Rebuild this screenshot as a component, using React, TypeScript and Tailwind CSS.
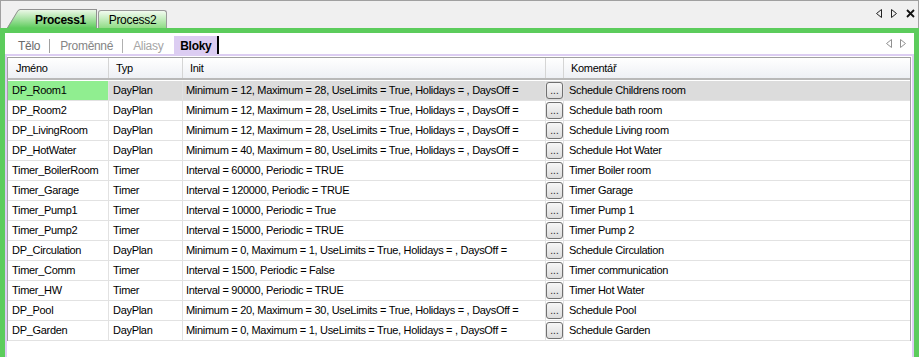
import React from "react";

type Row = { name: string; type: string; init: string; comment: string };

const rows: Row[] = [
  { name: "DP_Room1", type: "DayPlan", init: "Minimum = 12, Maximum = 28, UseLimits = True, Holidays = , DaysOff =", comment: "Schedule Childrens room" },
  { name: "DP_Room2", type: "DayPlan", init: "Minimum = 12, Maximum = 28, UseLimits = True, Holidays = , DaysOff =", comment: "Schedule bath room" },
  { name: "DP_LivingRoom", type: "DayPlan", init: "Minimum = 12, Maximum = 28, UseLimits = True, Holidays = , DaysOff =", comment: "Schedule Living room" },
  { name: "DP_HotWater", type: "DayPlan", init: "Minimum = 40, Maximum = 80, UseLimits = True, Holidays = , DaysOff =", comment: "Schedule Hot Water" },
  { name: "Timer_BoilerRoom", type: "Timer", init: "Interval = 60000, Periodic = TRUE", comment: "Timer Boiler room" },
  { name: "Timer_Garage", type: "Timer", init: "Interval = 120000, Periodic = TRUE", comment: "Timer Garage" },
  { name: "Timer_Pump1", type: "Timer", init: "Interval = 10000, Periodic = True", comment: "Timer Pump 1" },
  { name: "Timer_Pump2", type: "Timer", init: "Interval = 15000, Periodic = TRUE", comment: "Timer Pump 2" },
  { name: "DP_Circulation", type: "DayPlan", init: "Minimum = 0, Maximum = 1, UseLimits = True, Holidays = , DaysOff =", comment: "Schedule Circulation" },
  { name: "Timer_Comm", type: "Timer", init: "Interval = 1500, Periodic = False", comment: "Timer communication" },
  { name: "Timer_HW", type: "Timer", init: "Interval = 90000, Periodic = TRUE", comment: "Timer Hot Water" },
  { name: "DP_Pool", type: "DayPlan", init: "Minimum = 20, Maximum = 30, UseLimits = True, Holidays = , DaysOff =", comment: "Schedule Pool" },
  { name: "DP_Garden", type: "DayPlan", init: "Minimum = 0, Maximum = 1, UseLimits = True, Holidays = , DaysOff =", comment: "Schedule Garden" },
];

const cols = "grid grid-cols-[101px_74px_363px_18px_1fr]";

const Arrow = ({ dir, color }: { dir: "l" | "r"; color: string }) => (
  <svg width="6" height="9" viewBox="0 0 6 9">
    {dir === "l" ? (
      <polygon points="5.5,0.5 5.5,8.5 0.5,4.5" fill="none" stroke={color} strokeWidth="1" />
    ) : (
      <polygon points="0.5,0.5 0.5,8.5 5.5,4.5" fill="none" stroke={color} strokeWidth="1" />
    )}
  </svg>
);

const DotsButton = () => (
  <div className="mx-auto flex h-[17px] w-[17px] items-end justify-center rounded-[3px] border border-[#707070] bg-gradient-to-b from-[#f6f6f6] to-[#dcdcdc] pb-[2px] text-[10px] leading-none tracking-normal text-[#222]">
    ...
  </div>
);

export default function App() {
  return (
    <div className="h-[357px] w-[919px] overflow-hidden bg-[#f0f0f0] font-['Liberation_Sans',Arial,sans-serif] text-[11px] tracking-[-0.3px] text-black">
      {/* document tab strip */}
      <div className="flex h-[28px] items-end border-l border-r border-t border-[#a0a0a0] pl-[6px]">
        <div className="flex h-[19px] items-stretch">
          <svg width="13" height="19" viewBox="0 0 13 19" className="block">
            <defs>
              <linearGradient id="tg" x1="0" y1="0" x2="0" y2="1">
                <stop offset="0" stopColor="#eaf7e6" />
                <stop offset="1" stopColor="#5ccc5c" />
              </linearGradient>
            </defs>
            <polygon points="0,19 11,1 13,0 13,19" fill="url(#tg)" />
            <polyline points="0.5,19 11,1.5 13,0.5" fill="none" stroke="#909090" strokeWidth="1" />
          </svg>
          <div className="flex w-[77px] items-center border-r border-t border-[#909090] bg-gradient-to-b from-[#eaf7e6] to-[#5ccc5c] pl-[15px] pt-[1px] text-[12px] font-bold">
            Process1
          </div>
        </div>
        <div className="ml-[1px] flex h-[18px] w-[69px] items-center justify-center rounded-t-[3px] border border-b-0 border-[#9a9a9a] bg-gradient-to-b from-[#f2fbf0] to-[#8fdc85] pt-[1px] text-[12px]">
          Process2
        </div>
        <div className="mb-[10px] ml-auto mr-[3px] flex items-center gap-[9px]">
          <Arrow dir="l" color="#222" />
          <Arrow dir="r" color="#222" />
          <svg width="9" height="9" viewBox="0 0 9 9">
            <path d="M1 1 L8 8 M8 1 L1 8" stroke="#111" strokeWidth="1.8" />
          </svg>
        </div>
      </div>

      {/* green frame */}
      <div className="h-[329px] border-x-[5px] border-t-[5px] border-[#5ccc5c] bg-white">
        {/* inner tabs */}
        <div className="flex h-[23px] items-end border-b-2 border-[#dccdf2] pl-[6px] text-[12px]">
          <div className="flex h-[18px] items-center pt-[1px]">
            <span className="pl-[7px] pr-[9px] text-[#6a6a6a]">Tělo</span>
            <span className="h-[14px] w-px bg-[#a0a0a0]" />
            <span className="pl-[10px] pr-[9px] text-[#858585]">Proměnné</span>
            <span className="h-[14px] w-px bg-[#b0b0b0]" />
            <span className="pl-[10px] pr-[11px] text-[#a5a5a5]">Aliasy</span>
          </div>
          <div className="flex h-[18px] w-[45px] items-center justify-center border-r-2 border-black bg-[#dccdf2] pt-[1px] font-bold">
            Bloky
          </div>
          <div className="mb-[6px] ml-auto mr-[8px] flex items-center gap-[8px]">
            <Arrow dir="l" color="#909090" />
            <Arrow dir="r" color="#909090" />
          </div>
        </div>

        {/* grid panel */}
        <div className="h-[304px] border-x-2 border-[#dccdf2] pt-[1px]">
          <div className="mr-[1px] border-l border-t border-r border-[#a0a0a0]">
            <div className={`${cols} h-[22px] border-b-2 border-[#b9b9b9] bg-gradient-to-b from-white to-[#eef0f5]`}>
              <div className="flex items-center border-r border-[#d5d5d5] pl-[8px] pt-[1px]">Jméno</div>
              <div className="flex items-center border-r border-[#d5d5d5] pl-[7px] pt-[1px]">Typ</div>
              <div className="flex items-center border-r border-[#d5d5d5] pl-[7px] pt-[1px]">Init</div>
              <div className="border-r border-[#d5d5d5]" />
              <div className="flex items-center pl-[7px] pt-[1px]">Komentář</div>
            </div>
            <div className="pt-[1px]">
              {rows.map((r, i) => {
                const sel = i === 0;
                return (
                  <div
                    key={r.name}
                    className={`${cols} h-[20px] border-b border-[#e2e2e2] ${sel ? "bg-[#dcdcdc]" : "bg-white"}`}
                  >
                    <div className={`flex items-center border-r border-[#e2e2e2] pl-[4px] ${sel ? "bg-[#90ee90]" : ""}`}>
                      {r.name}
                    </div>
                    <div className="flex items-center border-r border-[#e2e2e2] pl-[4px]">{r.type}</div>
                    <div className="flex items-center overflow-hidden whitespace-nowrap border-r border-[#e2e2e2] pl-[3px]">
                      {r.init}
                    </div>
                    <div className="flex items-center border-r border-[#e2e2e2]">
                      <DotsButton />
                    </div>
                    <div className="flex items-center pl-[5px]">{r.comment}</div>
                  </div>
                );
              })}
            </div>
          </div>
        </div>
      </div>
    </div>
  );
}
